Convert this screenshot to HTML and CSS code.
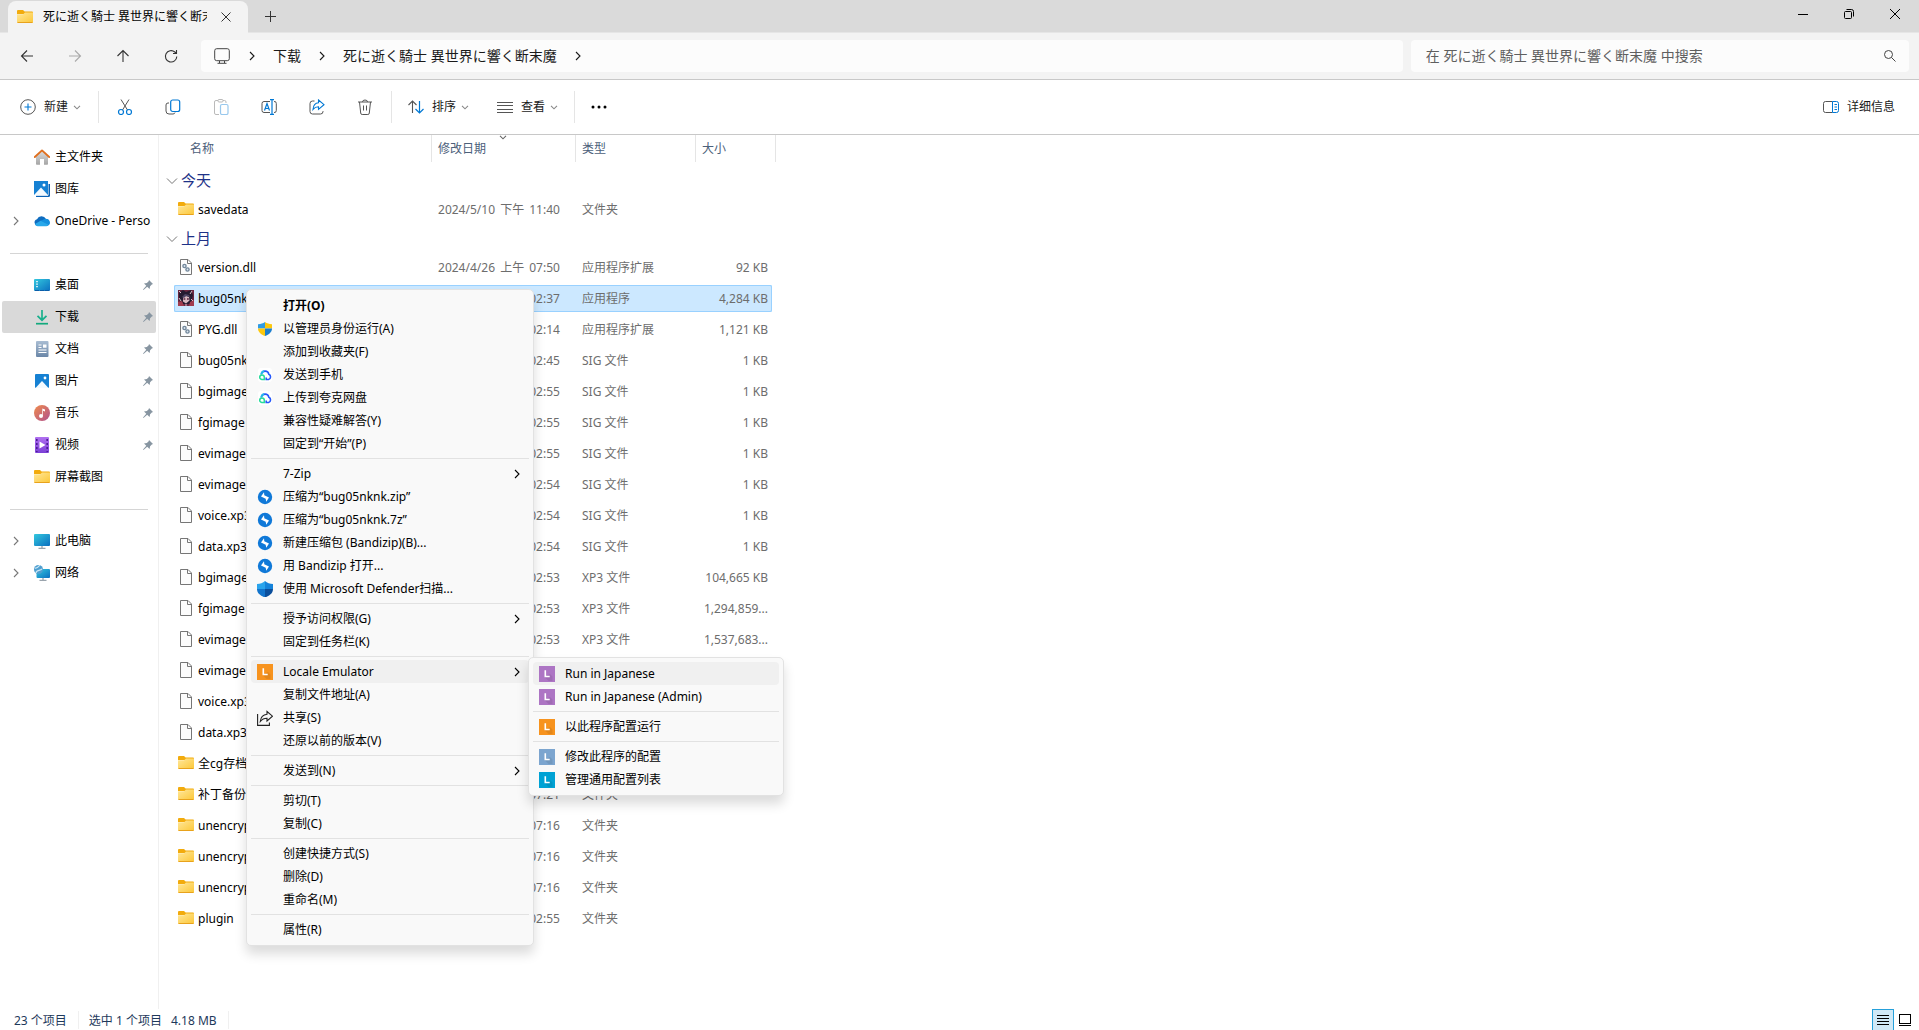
FILE: index.html
```html
<!DOCTYPE html>
<html lang="zh-CN">
<head>
<meta charset="utf-8">
<title>死に逝く騎士 異世界に響く断末魔</title>
<link rel="stylesheet" href="styles.css">
</head>
<body>
<svg class="defs" aria-hidden="true">
  <defs>
    <linearGradient id="g-folder" x1="0" y1="0" x2="1" y2="1"><stop offset="0" stop-color="#ffe79a"/><stop offset="1" stop-color="#fcc737"/></linearGradient>
    <linearGradient id="g-blue" x1="0" y1="0" x2="1" y2="1"><stop offset="0" stop-color="#33c8de"/><stop offset="1" stop-color="#0b6fc0"/></linearGradient>
    <linearGradient id="g-music" x1="0" y1="0" x2="1" y2="1"><stop offset="0" stop-color="#f08c4c"/><stop offset="1" stop-color="#b0508e"/></linearGradient>
    <linearGradient id="g-video" x1="0" y1="0" x2="0" y2="1"><stop offset="0" stop-color="#b070f0"/><stop offset="1" stop-color="#7b3fd6"/></linearGradient>
    <linearGradient id="g-doc" x1="0" y1="0" x2="0" y2="1"><stop offset="0" stop-color="#a9bdd3"/><stop offset="1" stop-color="#6b87a8"/></linearGradient>
    <linearGradient id="g-home" x1="0" y1="0" x2="0" y2="1"><stop offset="0" stop-color="#dcdcdc"/><stop offset="1" stop-color="#a5a5a5"/></linearGradient>
  </defs>
  <symbol id="folder" viewBox="0 0 16 16"><path d="M0 2a1 1 0 0 1 1-1h5l1.600 1.500H15a1 1 0 0 1 1 1V5H0z" fill="#f2ab0d"/><path d="M0 5.200h6.200L8 3.600h8V13a1 1 0 0 1-1 1H1a1 1 0 0 1-1-1z" fill="url(#g-folder)"/><path d="M.5 13.500h15" stroke="#e8a21c"/></symbol>
  <symbol id="file" viewBox="0 0 16 16"><path d="M2.500.5h7.500l3.500 3.500v11.500h-11z" fill="#fcfcfc" stroke="#767676"/><path d="M9.500.5v4h4" fill="none" stroke="#767676"/></symbol>
  <symbol id="dll" viewBox="0 0 16 16"><path d="M2.500.5h7.500l3.500 3.500v11.500h-11z" fill="#fcfcfc" stroke="#767676"/><path d="M9.500.5v4h4" fill="none" stroke="#767676"/><circle cx="6.500" cy="7" r="1.600" fill="#dbe5ee" stroke="#72879b" stroke-width="1.400"/><circle cx="9.500" cy="10.500" r="1.600" fill="#dbe5ee" stroke="#72879b" stroke-width="1.400"/></symbol>
  <symbol id="game" viewBox="0 0 16 16"><path d="M0 0h16v16H0z" fill="#6b2740"/><path d="M1 3l4-3 3 2 5-2 2 5-2 9H3L1 9z" fill="#251b30"/><path d="M5 7l3-1 3 1 .5 3.500L8 13.500l-3-2z" fill="#d9b9c0"/><path d="M5.500 9h1.800M9 9h1.800" stroke="#5a2340" stroke-width="1.300"/><path d="M4 7l3-3 4 1 2 4-2-2.500-3-.5-2 2z" fill="#4f4564"/><path d="M0 12l4-1 2 5H0zM12 12l4-2v6h-5z" fill="#a23c4e"/><path d="M1 1l2 2M14 1l-2 3M13 9l2 2M1 8l2 3M8 14v2" stroke="#d9bfc8"/></symbol>
  <symbol id="home" viewBox="0 0 16 16"><path d="M2 7.500L8 2l6 5.500V15a.8.8 0 0 1-.8.8H10V10H6v5.800H2.800A.8.8 0 0 1 2 15z" fill="url(#g-home)"/><path d="M.8 8L8 1.400 15.200 8" fill="none" stroke="#df6f1f" stroke-width="1.900" stroke-linejoin="round" stroke-linecap="round"/></symbol>
  <symbol id="gallery" viewBox="0 0 16 16"><path d="M3 3h13v11.500a1.500 1.500 0 0 1-1.500 1.500H2z" fill="#0a62b5"/><path d="M14 1.500v12.800H1" stroke="#fff" fill="none"/><path d="M0 0h14v14H0z" fill="#1681d3"/><path d="M0 14l7-7.500 7 7.500z" fill="#f3faff"/><circle cx="10" cy="4" r="1.500" fill="#fff"/></symbol>
  <symbol id="onedrive" viewBox="0 0 16 16"><path d="M3.500 13A3.500 3.500 0 0 1 3 6.200 5 5 0 0 1 12 6.100a3.500 3.500 0 0 1 .8 6.900z" fill="#0f6cbf"/><path d="M1 11l6-3.500L15 11a3 3 0 0 1-2.500 2.200h-9A3 3 0 0 1 1 11z" fill="#28a8ea"/><path d="M7 8l2.500-1.500a4 4 0 0 1 6.300 4L15 12z" fill="#1490df"/></symbol>
  <symbol id="desktop" viewBox="0 0 16 16"><rect y="2" width="16" height="12" rx="1" fill="url(#g-blue)"/><path d="M3 4v1.200M3 6.500v1.200M3 9v1.200" stroke="#fff" stroke-width="1.500"/><path d="M1 13.500h14" stroke="#0d5da8" stroke-dasharray="4 1"/></symbol>
  <symbol id="download" viewBox="0 0 16 16"><path d="M8 1v9M3.500 6.800L8 11.200l4.500-4.400" fill="none" stroke="#19b08d" stroke-width="1.700"/><path d="M2 14.700h12" stroke="#13a97d" stroke-width="1.700"/></symbol>
  <symbol id="docs" viewBox="0 0 16 16"><rect x="2" width="12.500" height="16" rx="1" fill="url(#g-doc)"/><path d="M4.500 4h3M4.500 6.500h3M4.500 9h8M4.500 11.500h8" stroke="#fff" stroke-width="1.200"/><path d="M9 3.500h3.500v3.200H9z" fill="#fff"/></symbol>
  <symbol id="pics" viewBox="0 0 16 16"><rect x="1" y="1" width="14" height="14" rx="1" fill="#1681d3"/><path d="M1.500 15L8 8l6.500 7z" fill="#f3faff"/><circle cx="11" cy="5" r="1.400" fill="#fff"/></symbol>
  <symbol id="music" viewBox="0 0 16 16"><circle cx="8" cy="8" r="8" fill="url(#g-music)"/><path d="M8.300 11V3.500l2.700 1v2l-2-.7V11z" fill="#fff"/><circle cx="7" cy="11" r="2" fill="#fff"/></symbol>
  <symbol id="video" viewBox="0 0 16 16"><rect x="1" width="14" height="16" rx="1" fill="url(#g-video)"/><path d="M2.800 2v13M13.200 2v13" stroke="#4b1d93" stroke-width="1.600" stroke-dasharray="2 2"/><path d="M5.500 4.500l6 3.500-6 3.500z" fill="#fff"/></symbol>
  <symbol id="pc" viewBox="0 0 16 16"><rect y="1" width="16" height="12" rx="1" fill="url(#g-blue)"/><path d="M8 13v2M4.500 15.300h7" stroke="#9aa4ad" stroke-width="1.300"/></symbol>
  <symbol id="net" viewBox="0 0 16 16"><rect x="2.500" y="4" width="13.500" height="9" rx="1" fill="url(#g-blue)"/><path d="M9 13v2M5.500 15.300h7" stroke="#9aa4ad" stroke-width="1.300"/><circle cx="4.500" cy="4.500" r="4.500" fill="#4f9fd0"/><path d="M1 3c2 1 4-2 5-3M2 8c0-3 4-2 6-4" stroke="#c9e6f5" stroke-width="1.300" fill="none"/></symbol>
  <symbol id="pin" viewBox="0 0 10 10"><path d="M6 0l4 4-1.200.4-1.700 1.800L6.600 9 4.200 6.700.5 10 0 9.500l3.300-3.700L1 3.500l2.900-.6L5.700 1.200z" fill="#8795a1"/></symbol>
  <symbol id="right" viewBox="0 0 8 10"><path d="M2 1l4 4-4 4" fill="none" stroke="currentColor" stroke-width="1.100"/></symbol>
  <symbol id="down" viewBox="0 0 12 8"><path d="M1 1.500l5 5 5-5" fill="none" stroke="currentColor"/></symbol>
  <symbol id="drop" viewBox="0 0 8 5"><path d="M1 .8l3 3 3-3" fill="none" stroke="currentColor" stroke-width="1.100"/></symbol>
  <symbol id="back" viewBox="0 0 16 16"><path d="M14 8H2.500M8 2.500L2.500 8 8 13.500" fill="none" stroke="currentColor" stroke-width="1.100"/></symbol>
  <symbol id="le" viewBox="0 0 16 16"><path d="M0 0h16v16H0z" fill="currentColor"/><path d="M5.500 11l4 4h4v-4.500L11 8z" fill="#000" opacity=".08"/><path d="M6.300 4.300v6.200h4.400" fill="none" stroke="#fff" stroke-width="1.600"/></symbol>
  <symbol id="uac" viewBox="0 0 16 16"><path d="M8 1v6.500H1V3.200C4 3.200 6 2.400 8 1z" fill="#2f9be3"/><path d="M8 1v6.500h7V3.200C12 3.200 10 2.400 8 1z" fill="#fdc80d"/><path d="M1 7.500h7V15C4 13.500 1 11 1 7.500z" fill="#fdc80d"/><path d="M15 7.500H8V15c4-1.500 7-4 7-7.500z" fill="#1c7fd0"/></symbol>
  <symbol id="quark" viewBox="0 0 16 16"><rect x="1" y="1" width="14" height="14" rx="3" fill="#fff"/><path d="M4.300 7.500a3.800 3.800 0 0 1 7.500-.3 2.800 2.800 0 0 1-.3 5.300H9.200V10.500" fill="none" stroke="#2458fb" stroke-width="1.600"/><path d="M4.300 7.300A3.800 3.800 0 0 1 7 4" fill="none" stroke="#20c0e8" stroke-width="1.600"/><path d="M7.300 12.500H5a2.300 2.300 0 1 1 2.300-2.300z" fill="none" stroke="#27dc9b" stroke-width="1.500"/></symbol>
  <symbol id="bandi" viewBox="0 0 16 16"><circle cx="8" cy="8" r="7.200" fill="#1079d8"/><path d="M7 3.300l.3 3L12 8.500 9.200 12.800 8.700 9.700 4 7.500z" fill="#fff"/></symbol>
  <symbol id="defender" viewBox="0 0 16 16"><path d="M8 0v8H0V3c3 0 6-1 8-3z" fill="#2aa4ec"/><path d="M8 0v8h8V3c-3 0-6-1-8-3z" fill="#1583da"/><path d="M0 8h8v8.500C3 14.500 0 12 0 8z" fill="#1274cc"/><path d="M16 8H8v8.500c5-2 8-4.500 8-8.500z" fill="#0b4f9c"/></symbol>
  <symbol id="share" viewBox="0 0 16 16"><path d="M.6 4v11.400h11.800v-3" fill="none" stroke="#222" stroke-width="1.100"/><path d="M10 1.500l5.500 4.700L10 11V8.300C7 8.300 5 9.300 3.300 11.500 3.700 7.500 6 4.700 10 4.300z" fill="none" stroke="#222" stroke-width="1.100"/></symbol>
</svg>

<div class="window">
  <header class="titlebar">
    <div class="tab">
      <svg class="i16"><use href="#folder"/></svg>
      <span class="tab-title">死に逝く騎士 異世界に響く断末魔</span>
      <button class="tab-close" aria-label="关闭标签页"><svg width="10" height="10"><path d="M.5.5l9 9m0-9l-9 9" stroke="#333"/></svg></button>
    </div>
    <button class="new-tab" aria-label="新标签页"><svg width="11" height="11"><path d="M0 5.500h11M5.500 0v11" stroke="#333"/></svg></button>
    <div class="caption">
      <button aria-label="最小化"><svg width="10" height="10"><path d="M0 5.500h10" stroke="#000"/></svg></button>
      <button aria-label="还原"><svg width="10" height="10" fill="none" stroke="#000"><rect x=".5" y="2.500" width="7" height="7" rx="1"/><path d="M2.500.5h5a2 2 0 0 1 2 2v5"/></svg></button>
      <button aria-label="关闭"><svg width="10" height="10"><path d="M0 0l10 10m0-10L0 10" stroke="#000"/></svg></button>
    </div>
  </header>

  <nav class="address">
    <div class="nav-buttons">
      <button aria-label="后退"><svg class="i16"><use href="#back"/></svg></button>
      <button class="dim" aria-label="前进"><svg class="i16 flip"><use href="#back"/></svg></button>
      <button aria-label="向上"><svg class="i16 quarter"><use href="#back"/></svg></button>
      <button aria-label="刷新"><svg class="i16" viewBox="0 0 16 16" fill="none" stroke="currentColor" stroke-width="1.100"><path d="M13.800 8.500a5.700 5.700 0 1 1-2-4.500L13.500 5.500M13.500 2v3.500H10"/></svg></button>
    </div>
    <div class="crumbs">
      <svg class="i16" viewBox="0 0 16 16" fill="none" stroke="#444"><rect x=".7" y=".7" width="14.600" height="12" rx="2"/><path d="M5.500 13v2M10.500 13v2M3.500 15.300h9"/></svg>
      <svg class="chev"><use href="#right"/></svg>
      <a href="#">下载</a>
      <svg class="chev"><use href="#right"/></svg>
      <a href="#">死に逝く騎士 異世界に響く断末魔</a>
      <svg class="chev"><use href="#right"/></svg>
    </div>
    <label class="search">
      <input type="text" aria-label="搜索" placeholder="在 死に逝く騎士 異世界に響く断末魔 中搜索">
      <svg width="12" height="12" fill="none" stroke="#444"><circle cx="4.500" cy="4.500" r="4"/><path d="M7.500 7.500L11.500 11.500"/></svg>
    </label>
  </nav>

  <div class="toolbar">
    <button class="tool text-tool new"><svg class="i16" viewBox="0 0 16 16" fill="none"><circle cx="8" cy="8" r="7.300" stroke="#555"/><path d="M4.500 8h7M8 4.500v7" stroke="#0078d4" stroke-width="1.100"/></svg>新建<svg class="drop"><use href="#drop"/></svg></button>
    <i class="rule"></i>
    <div class="tool-group">
      <button class="tool" aria-label="剪切"><svg class="i16" viewBox="0 0 16 16" fill="none"><path d="M4 .5l6.500 10.500M12 .5L5.500 11" stroke="#555"/><circle cx="4" cy="13" r="2.500" stroke="#0078d4" stroke-width="1.200"/><circle cx="12" cy="13" r="2.500" stroke="#0078d4" stroke-width="1.200"/></svg></button>
      <button class="tool" aria-label="复制"><svg class="i16" viewBox="0 0 16 16" fill="none"><path d="M4 4H3a2 2 0 0 0-2 2v6a3 3 0 0 0 3 3h4a2 2 0 0 0 2-1.500" stroke="#555"/><rect x="5.700" y="1" width="9" height="11.500" rx="2" stroke="#0078d4" stroke-width="1.200"/></svg></button>
      <button class="tool faded" aria-label="粘贴"><svg class="i16" viewBox="0 0 16 16" fill="none"><path d="M6 15.500H3A1.500 1.500 0 0 1 1.500 14V3A1.500 1.500 0 0 1 3 1.500h2M10 1.500h1.500A1.500 1.500 0 0 1 13 3v1" stroke="#555"/><rect x="5" y=".5" width="5" height="2.500" rx="1" stroke="#555"/><rect x="7.500" y="5.500" width="7.500" height="10" rx="1.500" stroke="#0078d4" stroke-width="1.200"/></svg></button>
      <button class="tool" aria-label="重命名"><svg class="i16" viewBox="0 0 16 16" fill="none"><path d="M9 2.500H3a2 2 0 0 0-2 2v7a2 2 0 0 0 2 2h6M13 2.500a2 2 0 0 1 2.300 2v7a2 2 0 0 1-2.300 2" stroke="#555"/><path d="M3.500 11.500L6 4.500l2.500 7M4.300 9.500h3.400M9 .6h4M9 15.400h4M11 .6v14.800" stroke="#0078d4" stroke-width="1.200"/></svg></button>
      <button class="tool" aria-label="共享"><svg class="i16" viewBox="0 0 16 16" fill="none"><path d="M5.500 2H3.500A2.500 2.500 0 0 0 1 4.500v8A2.500 2.500 0 0 0 3.500 15h8a2.500 2.500 0 0 0 2.500-2.500V12" stroke="#555"/><path d="M9.500 1l5.500 4.700-5.500 4.600V7.800C7 7.800 5.500 8.500 4 10.500 4.300 6.500 6.500 4 9.500 3.800z" stroke="#0078d4" stroke-width="1.100"/></svg></button>
      <button class="tool" aria-label="删除"><svg class="i16" viewBox="0 0 16 16" fill="none" stroke="#555"><path d="M1 3h14M5.500 3a2.500 2 0 0 1 5 0M2.500 3l1.200 11a1.500 1.500 0 0 0 1.500 1.500h5.600a1.500 1.500 0 0 0 1.500-1.500L13.500 3M6.500 6.500v5M9.500 6.500v5"/></svg></button>
    </div>
    <i class="rule"></i>
    <button class="tool text-tool sort"><svg class="i16" viewBox="0 0 16 16" fill="none"><path d="M4.500 14V2M.5 6l4-4 4 4" stroke="#555" stroke-width="1.100"/><path d="M11.500 2v12M7.500 10l4 4 4-4" stroke="#0078d4" stroke-width="1.200"/></svg>排序<svg class="drop"><use href="#drop"/></svg></button>
    <button class="tool text-tool view"><svg class="i16" viewBox="0 0 16 16"><path d="M0 3.500h16M0 6.500h16M0 10.500h16M0 13.500h16" stroke="#555"/></svg>查看<svg class="drop"><use href="#drop"/></svg></button>
    <i class="rule"></i>
    <button class="tool more" aria-label="更多"><svg width="16" height="4"><circle cx="2" cy="2" r="1.500"/><circle cx="8" cy="2" r="1.500"/><circle cx="14" cy="2" r="1.500"/></svg></button>
    <button class="tool text-tool details"><svg class="i16" viewBox="0 0 16 16" fill="none"><path d="M9.500 2.500h-7a2 2 0 0 0-2 2v7a2 2 0 0 0 2 2h7" stroke="#555"/><path d="M9.500 2.500h4a2 2 0 0 1 2 2v7a2 2 0 0 1-2 2h-4zM11.500 5.500h2.500M11.500 8h2.500M11.500 10.500h2.500" stroke="#0078d4"/></svg>详细信息</button>
  </div>

  <div class="main">
    <aside class="sidebar">
      <a class="side" href="#"><svg class="i16"><use href="#home"/></svg><span>主文件夹</span></a>
      <a class="side" href="#"><svg class="i16"><use href="#gallery"/></svg><span>图库</span></a>
      <a class="side tree" href="#"><svg class="chev"><use href="#right"/></svg><svg class="i16"><use href="#onedrive"/></svg><span>OneDrive - Perso</span></a>
      <hr>
      <a class="side" href="#"><svg class="i16"><use href="#desktop"/></svg><span>桌面</span><svg class="pin"><use href="#pin"/></svg></a>
      <a class="side current" href="#"><svg class="i16"><use href="#download"/></svg><span>下载</span><svg class="pin"><use href="#pin"/></svg></a>
      <a class="side" href="#"><svg class="i16"><use href="#docs"/></svg><span>文档</span><svg class="pin"><use href="#pin"/></svg></a>
      <a class="side" href="#"><svg class="i16"><use href="#pics"/></svg><span>图片</span><svg class="pin"><use href="#pin"/></svg></a>
      <a class="side" href="#"><svg class="i16"><use href="#music"/></svg><span>音乐</span><svg class="pin"><use href="#pin"/></svg></a>
      <a class="side" href="#"><svg class="i16"><use href="#video"/></svg><span>视频</span><svg class="pin"><use href="#pin"/></svg></a>
      <a class="side" href="#"><svg class="i16"><use href="#folder"/></svg><span>屏幕截图</span></a>
      <hr>
      <a class="side tree" href="#"><svg class="chev"><use href="#right"/></svg><svg class="i16"><use href="#pc"/></svg><span>此电脑</span></a>
      <a class="side tree" href="#"><svg class="chev"><use href="#right"/></svg><svg class="i16"><use href="#net"/></svg><span>网络</span></a>
    </aside>

    <section class="files">
      <table>
        <colgroup><col class="c-gutter"><col class="c-name"><col class="c-date"><col class="c-type"><col class="c-size"><col class="c-end"></colgroup>
        <thead>
          <tr><th class="name-head" colspan="2">名称</th><th class="sorted">修改日期<svg class="sort-mark"><use href="#drop"/></svg></th><th>类型</th><th colspan="2">大小</th></tr>
        </thead>
        <tbody>
          <tr class="group"><td colspan="6"><svg class="fold"><use href="#down"/></svg>今天</td></tr>
          <tr><td></td><td><svg class="i16"><use href="#folder"/></svg>savedata</td><td>2024/5/10 <i>下午</i> 11:40</td><td>文件夹</td><td></td></tr>
          <tr class="group"><td colspan="6"><svg class="fold"><use href="#down"/></svg>上月</td></tr>
          <tr><td></td><td><svg class="i16"><use href="#dll"/></svg>version.dll</td><td>2024/4/26 <i>上午</i> 07:50</td><td>应用程序扩展</td><td>92 KB</td></tr>
          <tr class="selected"><td></td><td><svg class="i16"><use href="#game"/></svg>bug05nknk</td><td>2024/4/26 <i>上午</i> 02:37</td><td>应用程序</td><td>4,284 KB</td></tr>
          <tr><td></td><td><svg class="i16"><use href="#dll"/></svg>PYG.dll</td><td>2024/4/26 <i>上午</i> 02:14</td><td>应用程序扩展</td><td>1,121 KB</td></tr>
          <tr><td></td><td><svg class="i16"><use href="#file"/></svg>bug05nknk</td><td>2024/4/26 <i>上午</i> 02:45</td><td>SIG 文件</td><td>1 KB</td></tr>
          <tr><td></td><td><svg class="i16"><use href="#file"/></svg>bgimage</td><td>2024/4/26 <i>上午</i> 02:55</td><td>SIG 文件</td><td>1 KB</td></tr>
          <tr><td></td><td><svg class="i16"><use href="#file"/></svg>fgimage</td><td>2024/4/26 <i>上午</i> 02:55</td><td>SIG 文件</td><td>1 KB</td></tr>
          <tr><td></td><td><svg class="i16"><use href="#file"/></svg>evimage</td><td>2024/4/26 <i>上午</i> 02:55</td><td>SIG 文件</td><td>1 KB</td></tr>
          <tr><td></td><td><svg class="i16"><use href="#file"/></svg>evimage</td><td>2024/4/26 <i>上午</i> 02:54</td><td>SIG 文件</td><td>1 KB</td></tr>
          <tr><td></td><td><svg class="i16"><use href="#file"/></svg>voice.xp3</td><td>2024/4/26 <i>上午</i> 02:54</td><td>SIG 文件</td><td>1 KB</td></tr>
          <tr><td></td><td><svg class="i16"><use href="#file"/></svg>data.xp3</td><td>2024/4/26 <i>上午</i> 02:54</td><td>SIG 文件</td><td>1 KB</td></tr>
          <tr><td></td><td><svg class="i16"><use href="#file"/></svg>bgimage</td><td>2024/4/26 <i>上午</i> 02:53</td><td>XP3 文件</td><td>104,665 KB</td></tr>
          <tr><td></td><td><svg class="i16"><use href="#file"/></svg>fgimage</td><td>2024/4/26 <i>上午</i> 02:53</td><td>XP3 文件</td><td>1,294,859...</td></tr>
          <tr><td></td><td><svg class="i16"><use href="#file"/></svg>evimage</td><td>2024/4/26 <i>上午</i> 02:53</td><td>XP3 文件</td><td>1,537,683...</td></tr>
          <tr><td></td><td><svg class="i16"><use href="#file"/></svg>evimage</td><td></td><td></td><td></td></tr>
          <tr><td></td><td><svg class="i16"><use href="#file"/></svg>voice.xp3</td><td></td><td></td><td></td></tr>
          <tr><td></td><td><svg class="i16"><use href="#file"/></svg>data.xp3</td><td></td><td></td><td></td></tr>
          <tr><td></td><td><svg class="i16"><use href="#folder"/></svg>全cg存档</td><td></td><td></td><td></td></tr>
          <tr><td></td><td><svg class="i16"><use href="#folder"/></svg>补丁备份</td><td>2024/4/26 <i>上午</i> 07:21</td><td>文件夹</td><td></td></tr>
          <tr><td></td><td><svg class="i16"><use href="#folder"/></svg>unencrypted</td><td>2024/4/26 <i>上午</i> 07:16</td><td>文件夹</td><td></td></tr>
          <tr><td></td><td><svg class="i16"><use href="#folder"/></svg>unencrypted</td><td>2024/4/26 <i>上午</i> 07:16</td><td>文件夹</td><td></td></tr>
          <tr><td></td><td><svg class="i16"><use href="#folder"/></svg>unencrypted</td><td>2024/4/26 <i>上午</i> 07:16</td><td>文件夹</td><td></td></tr>
          <tr><td></td><td><svg class="i16"><use href="#folder"/></svg>plugin</td><td>2024/4/26 <i>上午</i> 02:55</td><td>文件夹</td><td></td></tr>
        </tbody>
      </table>
    </section>
  </div>

  <footer class="status">
    <span>23 个项目</span>
    <span>选中 1 个项目<em>4.18 MB</em></span>
    <div class="modes">
      <button class="on" aria-label="详细信息"><svg width="12" height="11"><path d="M0 .5h12M0 3.500h12M0 6.500h12M0 9.500h12" stroke="#000"/></svg></button>
      <button aria-label="大图标"><svg width="12" height="12" fill="none" stroke="#000"><rect x=".5" y=".5" width="11" height="9"/><path d="M0 11.500h12"/></svg></button>
    </div>
  </footer>

  <div class="menu context">
    <button class="item"><i></i><b>打开(O)</b></button>
    <button class="item"><svg class="i16"><use href="#uac"/></svg>以管理员身份运行(A)</button>
    <button class="item"><i></i>添加到收藏夹(F)</button>
    <button class="item"><svg class="i16"><use href="#quark"/></svg>发送到手机</button>
    <button class="item"><svg class="i16"><use href="#quark"/></svg>上传到夸克网盘</button>
    <button class="item"><i></i>兼容性疑难解答(Y)</button>
    <button class="item"><i></i>固定到“开始”(P)</button>
    <hr>
    <button class="item"><i></i>7-Zip<svg class="chev"><use href="#right"/></svg></button>
    <button class="item"><svg class="i16"><use href="#bandi"/></svg>压缩为“bug05nknk.zip”</button>
    <button class="item"><svg class="i16"><use href="#bandi"/></svg>压缩为“bug05nknk.7z”</button>
    <button class="item"><svg class="i16"><use href="#bandi"/></svg>新建压缩包 (Bandizip)(B)...</button>
    <button class="item"><svg class="i16"><use href="#bandi"/></svg>用 Bandizip 打开...</button>
    <button class="item"><svg class="i16"><use href="#defender"/></svg>使用 Microsoft Defender扫描...</button>
    <hr>
    <button class="item"><i></i>授予访问权限(G)<svg class="chev"><use href="#right"/></svg></button>
    <button class="item"><i></i>固定到任务栏(K)</button>
    <hr>
    <div class="parent">
      <button class="item hot"><svg class="i16 orange"><use href="#le"/></svg>Locale Emulator<svg class="chev"><use href="#right"/></svg></button>
      <div class="menu submenu">
        <button class="item hot"><svg class="i16 purple"><use href="#le"/></svg>Run in Japanese</button>
        <button class="item"><svg class="i16 purple"><use href="#le"/></svg>Run in Japanese (Admin)</button>
        <hr>
        <button class="item"><svg class="i16 orange"><use href="#le"/></svg>以此程序配置运行</button>
        <hr>
        <button class="item"><svg class="i16 steel"><use href="#le"/></svg>修改此程序的配置</button>
        <button class="item"><svg class="i16 cyan"><use href="#le"/></svg>管理通用配置列表</button>
      </div>
    </div>
    <button class="item"><i></i>复制文件地址(A)</button>
    <button class="item"><svg class="i16"><use href="#share"/></svg>共享(S)</button>
    <button class="item"><i></i>还原以前的版本(V)</button>
    <hr>
    <button class="item"><i></i>发送到(N)<svg class="chev"><use href="#right"/></svg></button>
    <hr>
    <button class="item"><i></i>剪切(T)</button>
    <button class="item"><i></i>复制(C)</button>
    <hr>
    <button class="item"><i></i>创建快捷方式(S)</button>
    <button class="item"><i></i>删除(D)</button>
    <button class="item"><i></i>重命名(M)</button>
    <hr>
    <button class="item"><i></i>属性(R)</button>
  </div>
</div>
</body>
</html>
```
FILE: styles.css
```css
* { box-sizing: border-box; }
body {
  margin: 0;
  font: 12px/16px "Noto Sans", "Noto Sans CJK SC", sans-serif;
  color: #000;
  background: #fff;
}
button {
  font: inherit;
  color: inherit;
  border: 0;
  padding: 0;
  background: none;
}
a { color: inherit; text-decoration: none; }
svg { flex: none; display: block; }
.defs { position: absolute; width: 0; height: 0; }
.i16 { width: 16px; height: 16px; }
.chev { width: 8px; height: 10px; }

.window {
  position: relative;
  display: flex;
  flex-direction: column;
  min-height: 100vh;
}

/* Title bar */
.titlebar {
  display: flex;
  height: 33px;
  padding: 0 1px 0 8px;
  background: #dadada;
  border-bottom: 1px solid #e6e6e6;
}
.tab {
  display: flex;
  align-items: center;
  width: 240px;
  margin: 1px 0 -1px;
  padding: 0 9px;
  background: #f3f3f3;
  border-radius: 8px 8px 0 0;
}
.tab-title {
  flex: 1;
  margin: 0 6px 0 10px;
  overflow: hidden;
  white-space: nowrap;
}
.tab-close { margin: 0 8px; }
.new-tab { width: 45px; display: grid; place-items: center; }
.caption { display: flex; margin-left: auto; }
.caption button {
  width: 46px;
  height: 28px;
  display: grid;
  place-items: center;
}

/* Address row */
.address {
  display: flex;
  align-items: center;
  height: 47px;
  padding-right: 10px;
  background: #f3f3f3;
  border-bottom: 1px solid #c8c8c8;
  font-size: 14px;
}
.nav-buttons { display: flex; flex: none; width: 201px; padding-left: 3px; color: #333; }
.nav-buttons button { width: 48px; height: 32px; display: grid; place-items: center; }
.nav-buttons .dim { color: #aaa; }
.flip { transform: scaleX(-1); }
.quarter { transform: rotate(90deg); }
.crumbs, .search {
  display: flex;
  align-items: center;
  height: 32px;
  background: #fcfcfc;
  border-radius: 4px;
}
.crumbs { flex: 1; gap: 17px; padding-left: 13px; color: #1a1a1a; }
.crumbs .i16 { margin-right: 1px; }
.search { width: 26.1%; margin-left: 8px; padding: 0 13px 0 15px; }
.search input {
  flex: 1;
  min-width: 0;
  border: 0;
  padding: 0;
  font: inherit;
  background: none;
  outline: 0;
}
.search input::placeholder { color: #5f5f5f; opacity: 1; }

/* Command bar */
.toolbar {
  display: flex;
  align-items: center;
  height: 55px;
  padding: 0 24px 0 20px;
  border-bottom: 1px solid #c8c8c8;
  color: #1a1a1a;
}
.tool { height: 32px; display: flex; align-items: center; justify-content: center; }
.text-tool { gap: 8px; white-space: nowrap; }
.drop { width: 8px; height: 5px; margin-left: -3px; color: #888; }
.rule { width: 1px; height: 32px; background: #e5e5e5; }
.new { margin-right: 17px; }
.tool-group { display: flex; padding: 0 2px; }
.tool-group .tool { width: 48px; }
.faded { opacity: .4; }
.sort { margin: 0 28px 0 16px; }
.view { margin-right: 16px; }
.more { width: 48px; }
.details { margin-left: auto; }

/* Body */
.main { flex: 1; display: flex; }
.sidebar {
  width: 159px;
  padding: 6px 2px 0;
  border-right: 1px solid #f0f0f0;
}
.side {
  display: flex;
  align-items: center;
  gap: 5px;
  height: 32px;
  padding: 0 3px 0 32px;
  border-radius: 2px;
}
.side span { flex: 1; white-space: nowrap; }
.tree { padding: 0 0 0 10px; }
.tree .chev { margin-right: 9px; color: #777; }
.current { background: #d9d9d9; }
.pin { width: 10px; height: 10px; }
.sidebar hr {
  height: 1px;
  margin: 16px 8px 15px;
  border: 0;
  background: #d5d5d5;
}
.files { flex: 1; min-width: 0; }
table {
  width: 617px;
  margin-top: -4px;
  table-layout: fixed;
  border-collapse: separate;
  border-spacing: 0 4px;
}
.c-gutter { width: 15px; }
.c-name { width: 258px; }
.c-date { width: 144px; }
.c-type { width: 120px; }
.c-size { width: 76px; }
.c-end { width: 4px; }
th {
  position: relative;
  height: 30px;
  padding: 0 6px 2px;
  font-weight: 400;
  text-align: left;
  color: #4c607a;
  background: linear-gradient(#e5e5e5, #e5e5e5) right top / 1px 27px no-repeat;
}
.name-head { padding-left: 31px; }
.sort-mark {
  position: absolute;
  top: 0;
  left: calc(50% - 5px);
  width: 8px;
  height: 5px;
  color: #666;
}
td {
  height: 27px;
  padding: 0 6px;
  white-space: nowrap;
  overflow: hidden;
  color: #6d6d6d;
}
td:nth-child(1) { padding: 0; }
td:nth-child(2) { padding-left: 4px; color: #000; }
td:nth-child(5) { padding: 0 4px 0 0; text-align: right; }
td .i16 { display: inline-block; vertical-align: -3px; margin-right: 4px; }
td i { margin: 0 2px; font-style: normal; }
.group td {
  height: 23px;
  padding: 0 0 2px 7px;
  font-size: 15px;
  line-height: 20px;
  color: #1e3287;
}
.fold {
  display: inline-block;
  vertical-align: middle;
  width: 12px;
  height: 8px;
  margin-right: 3px;
  color: #777;
}
.selected td:nth-child(n+2) { background: #cce8ff; box-shadow: inset 0 1px #99d1ff, inset 0 -1px #99d1ff; }
.selected td:nth-child(2) {
  border-radius: 2px 0 0 2px;
  box-shadow: inset 0 1px #99d1ff, inset 0 -1px #99d1ff, inset 1px 0 #99d1ff;
}
.selected td:nth-child(5) {
  border-radius: 0 2px 2px 0;
  box-shadow: inset 0 1px #99d1ff, inset 0 -1px #99d1ff, inset -1px 0 #99d1ff;
}

/* Status bar */
.status {
  display: flex;
  align-items: center;
  height: 21px;
  padding: 0 3px 0 4px;
  color: #1e395b;
}
.status span { padding: 2px 11px 0 10px; border-right: 1px solid #f0f0f0; }
.status em { margin-left: 9px; font-style: normal; }
.modes { display: flex; margin-left: auto; }
.modes button { width: 22px; height: 21px; display: grid; place-items: center; }
.modes .on { background: #cfe8f6; border: 1px solid #26a0da; border-bottom: 0; }

/* Menus */
.menu {
  position: absolute;
  padding: 4px;
  background: #f9f9f9;
  border: 1px solid #e2e2e2;
  border-radius: 5px;
  box-shadow: 0 8px 12px rgba(0, 0, 0, .14);
}
.context { left: 246px; top: 289px; width: 288px; }
.parent { position: relative; }
.submenu { left: 277px; top: -3px; width: 256px; z-index: 1; }
.item {
  display: flex;
  align-items: center;
  width: 100%;
  height: 23px;
  padding: 0 8px 0 6px;
  border-radius: 4px;
  white-space: nowrap;
}
.item > :first-child { flex: none; width: 16px; margin-right: 10px; }
.item > :first-child + b { flex: 1; text-align: left; }
.item .chev { margin-left: auto; }
.hot { background: #f0f0f0; }
.menu hr { height: 1px; margin: 3px 0; border: 0; background: #e2e2e2; }
.orange { color: #f7931e; }
.purple { color: #ad75c4; }
.steel { color: #7ca5cf; }
.cyan { color: #00a2d4; }
```
